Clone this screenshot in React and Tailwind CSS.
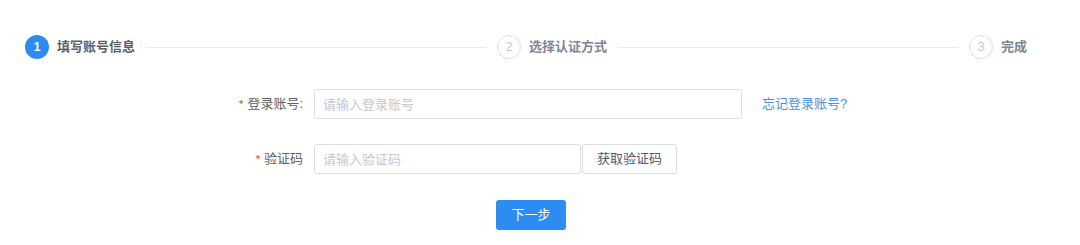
import React from 'react';

const font = { fontFamily: '"Liberation Sans", "Noto Sans CJK SC", sans-serif' };

const steps = [
  { n: 1, label: '填写账号信息', active: true },
  { n: 2, label: '选择认证方式' },
  { n: 3, label: '完成' },
];

const Step = ({ n, label, active, last }) => (
  <div className={`flex items-center ${last ? '' : 'flex-1'}`}>
    <div
      className={`w-6 h-6 rounded-full flex items-center justify-center text-[12px] shrink-0 ${
        active ? 'bg-[#2d8cf0] text-white font-bold' : 'border border-[#dcdee2] text-[#c5c8ce] bg-white'
      }`}
    >
      {n}
    </div>
    <span className={`ml-2 text-[13px] font-bold whitespace-nowrap ${active ? 'text-[#5c5f66]' : 'text-[#808695]'}`}>
      {label}
    </span>
    {!last && <div className="flex-1 h-px bg-[#e8eaec] ml-[11px] mr-[10px]" />}
  </div>
);

const App = () => {
  return (
    <div className="w-[1080px] h-[245px] bg-white" style={font}>
      <div className="flex items-center pl-[25px] pr-[53px] pt-[35px]">
        {steps.map((s, i) => (
          <Step key={s.n} {...s} last={i === steps.length - 1} />
        ))}
      </div>

      <div className="mt-[30px] flex flex-col">
        <div className="flex items-center h-[30px]">
          <label className="w-[314px] text-right pr-[11px] text-[13px] text-[#606266]">
            <span className="text-[#ed4014] mr-1 text-[11px]">*</span>登录账号:
          </label>
          <input
            className="w-[428px] h-[30px] border border-[#dcdee2] rounded-[3px] px-2 text-[13px] text-[#515a6e] placeholder:text-[#c5c8ce] outline-none"
            placeholder="请输入登录账号"
          />
          <a href="#" className="ml-5 text-[13px] text-[#4a90e2]">
            忘记登录账号?
          </a>
        </div>

        <div className="flex items-center h-[30px] mt-[25px]">
          <label className="w-[314px] text-right pr-[11px] text-[13px] text-[#606266]">
            <span className="text-[#ed4014] mr-1 text-[11px]">*</span>验证码
          </label>
          <input
            className="w-[267px] h-[30px] border border-[#dcdee2] rounded-[3px] px-2 text-[13px] text-[#515a6e] placeholder:text-[#c5c8ce] outline-none"
            placeholder="请输入验证码"
          />
          <button className="ml-px w-[95px] h-[30px] border border-[#dcdee2] rounded-[3px] bg-white text-[13px] text-[#515a6e]">
            获取验证码
          </button>
        </div>

        <div className="flex mt-[26px] pl-[496px]">
          <button className="w-[70px] h-[30px] rounded-[3px] bg-[#2d8cf0] text-white text-[13px]">下一步</button>
        </div>
      </div>
    </div>
  );
};

export default App;
